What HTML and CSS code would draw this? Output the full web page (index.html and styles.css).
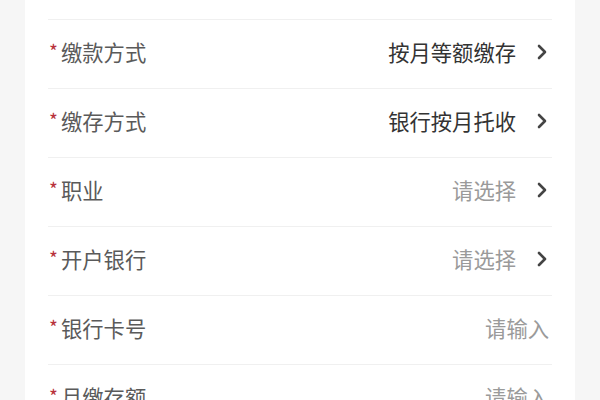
FILE: index.html
```html
<!DOCTYPE html>
<html lang="zh-CN">
<head>
<meta charset="utf-8">
<title>表单</title>
<link rel="stylesheet" href="styles.css">
</head>
<body>
<div class="card">
  <div class="list">
    <div class="row">
      <div class="label"><span class="req">*</span>缴存期限</div>
      <div class="value placeholder">请选择</div>
    </div>
    <div class="row">
      <div class="label"><span class="req">*</span>缴款方式</div>
      <div class="value">按月等额缴存</div>
      <svg class="chev" viewBox="0 0 12 16"><polyline points="3,2 9,8 3,14"/></svg>
    </div>
    <div class="row">
      <div class="label"><span class="req">*</span>缴存方式</div>
      <div class="value">银行按月托收</div>
      <svg class="chev" viewBox="0 0 12 16"><polyline points="3,2 9,8 3,14"/></svg>
    </div>
    <div class="row">
      <div class="label"><span class="req">*</span>职业</div>
      <div class="value placeholder">请选择</div>
      <svg class="chev" viewBox="0 0 12 16"><polyline points="3,2 9,8 3,14"/></svg>
    </div>
    <div class="row">
      <div class="label"><span class="req">*</span>开户银行</div>
      <div class="value placeholder">请选择</div>
      <svg class="chev" viewBox="0 0 12 16"><polyline points="3,2 9,8 3,14"/></svg>
    </div>
    <div class="row">
      <div class="label"><span class="req">*</span>银行卡号</div>
      <div class="value placeholder input">请输入</div>
    </div>
    <div class="row">
      <div class="label"><span class="req">*</span>月缴存额</div>
      <div class="value placeholder input">请输入</div>
    </div>
  </div>
</div>
</body>
</html>
```
FILE: styles.css
```css
html, body {
  margin: 0;
  padding: 0;
  height: 100%;
  overflow: hidden;
}
body {
  background: #f6f6f6;
  font-family: "Noto Sans CJK SC", "Noto Sans", sans-serif;
}
.card {
  display: flow-root;
  margin: 0 25px;
  background: #ffffff;
  height: 100%;
  padding: 0 23px;
  box-sizing: border-box;
}
.list {
  margin-top: -49px;
}
.row {
  display: flex;
  align-items: center;
  height: 68px;
  box-sizing: content-box;
  border-bottom: 1px solid #f0f0f0;
  font-size: 21.3px;
  line-height: 1;
}
.row > * {
  position: relative;
  top: -2px;
}
.label {
  flex: 1;
  color: #5a5a5a;
  display: flex;
  align-items: center;
}
.req {
  color: #b8323a;
  font-size: 19px;
  width: 11px;
  margin-left: 1px;
  margin-right: 1px;
  position: relative;
  top: -1px;
}
.value {
  color: #333333;
}
.value.placeholder {
  color: #9a9a9a;
}
.value.input {
  margin-right: 3px;
}
.chev {
  width: 12px;
  height: 16px;
  margin-left: 20px;
  margin-right: 4px;
  fill: none;
  stroke: #444444;
  stroke-width: 2.6;
  stroke-linecap: round;
  stroke-linejoin: round;
}
```
